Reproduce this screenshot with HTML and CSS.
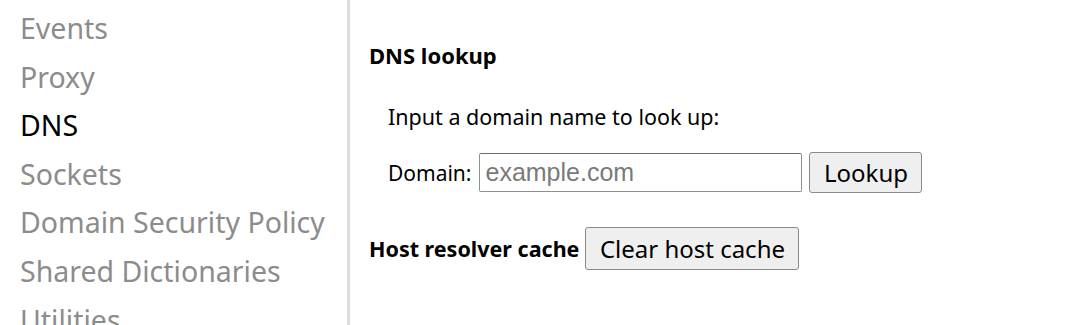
FILE: index.html
```html
<!DOCTYPE html>
<html>
<head>
<meta charset="utf-8">
<link rel="stylesheet" href="styles.css">
</head>
<body>
<div class="page">
  <nav class="sidebar">
    <div class="tab">Events</div>
    <div class="tab">Proxy</div>
    <div class="tab selected">DNS</div>
    <div class="tab">Sockets</div>
    <div class="tab">Domain Security Policy</div>
    <div class="tab">Shared Dictionaries</div>
    <div class="tab">Utilities</div>
  </nav>
  <main class="content">
    <h4 class="heading">DNS lookup</h4>
    <div class="indent">
      <p class="hint">Input a domain name to look up:</p>
      <form class="lookup-row">
        <label class="label">Domain:</label>
        <input class="domain-input" type="text" placeholder="example.com">
        <button class="btn lookup-btn" type="button">Lookup</button>
      </form>
    </div>
    <div class="cache-row">
      <span class="heading inline">Host resolver cache</span>
      <button class="btn clear-btn" type="button">Clear host cache</button>
    </div>
  </main>
</div>
</body>
</html>
```

FILE: styles.css
```css
html, body {
  margin: 0;
  padding: 0;
  background: #ffffff;
  overflow: hidden;
}
body {
  width: 1072px;
  height: 325px;
  font-family: "Noto Sans", "Open Sans", sans-serif;
  color: #000;
}
.page {
  display: flex;
  height: 325px;
  overflow: hidden;
}
.sidebar {
  width: 347px;
  flex: none;
  border-right: 3px solid #dcdcdc;
  padding-top: 4px;
  box-sizing: content-box;
}
.tab {
  font-size: 28.5px;
  line-height: 48.6px;
  height: 48.6px;
  padding-left: 20px;
  color: #8c8c8c;
  white-space: nowrap;
}
.tab.selected {
  color: #000;
}
.content {
  padding-left: 19px;
  padding-top: 40px;
}
.heading {
  font-size: 22px;
  font-weight: bold;
  margin: 0;
  line-height: 30px;
}
.heading.inline {
  font-size: 21.5px;
  margin-right: 6px;
}
.indent {
  padding-left: 19px;
  padding-top: 32px;
}
.hint {
  margin: 0;
  font-size: 21.5px;
  line-height: 30px;
}
.lookup-row {
  display: flex;
  align-items: center;
  margin-top: 20px;
}
.label {
  font-size: 21px;
  margin-right: 8px;
}
.domain-input {
  width: 323px;
  height: 39px;
  box-sizing: border-box;
  border: 1px solid #8f8f8f;
  border-top-color: #6b6b6b;
  border-radius: 2px;
  padding: 0 5px;
  font-family: "Liberation Sans", Arial, sans-serif;
  font-size: 25px;
  margin: 0 7px 0 0;
}
.domain-input::placeholder {
  color: #7a7a7a;
}
.btn {
  font-family: "Noto Sans", "Open Sans", sans-serif;
  font-size: 24px;
  color: #000;
  background: #efefef;
  border: 1px solid #8a8a8a;
  border-radius: 3px;
  box-sizing: border-box;
  padding: 0 10px;
  margin: 0;
}
.lookup-btn {
  width: 113px;
  height: 41px;
}
.cache-row {
  display: flex;
  align-items: center;
  margin-top: 34px;
}
.clear-btn {
  width: 214px;
  height: 43px;
}
```
